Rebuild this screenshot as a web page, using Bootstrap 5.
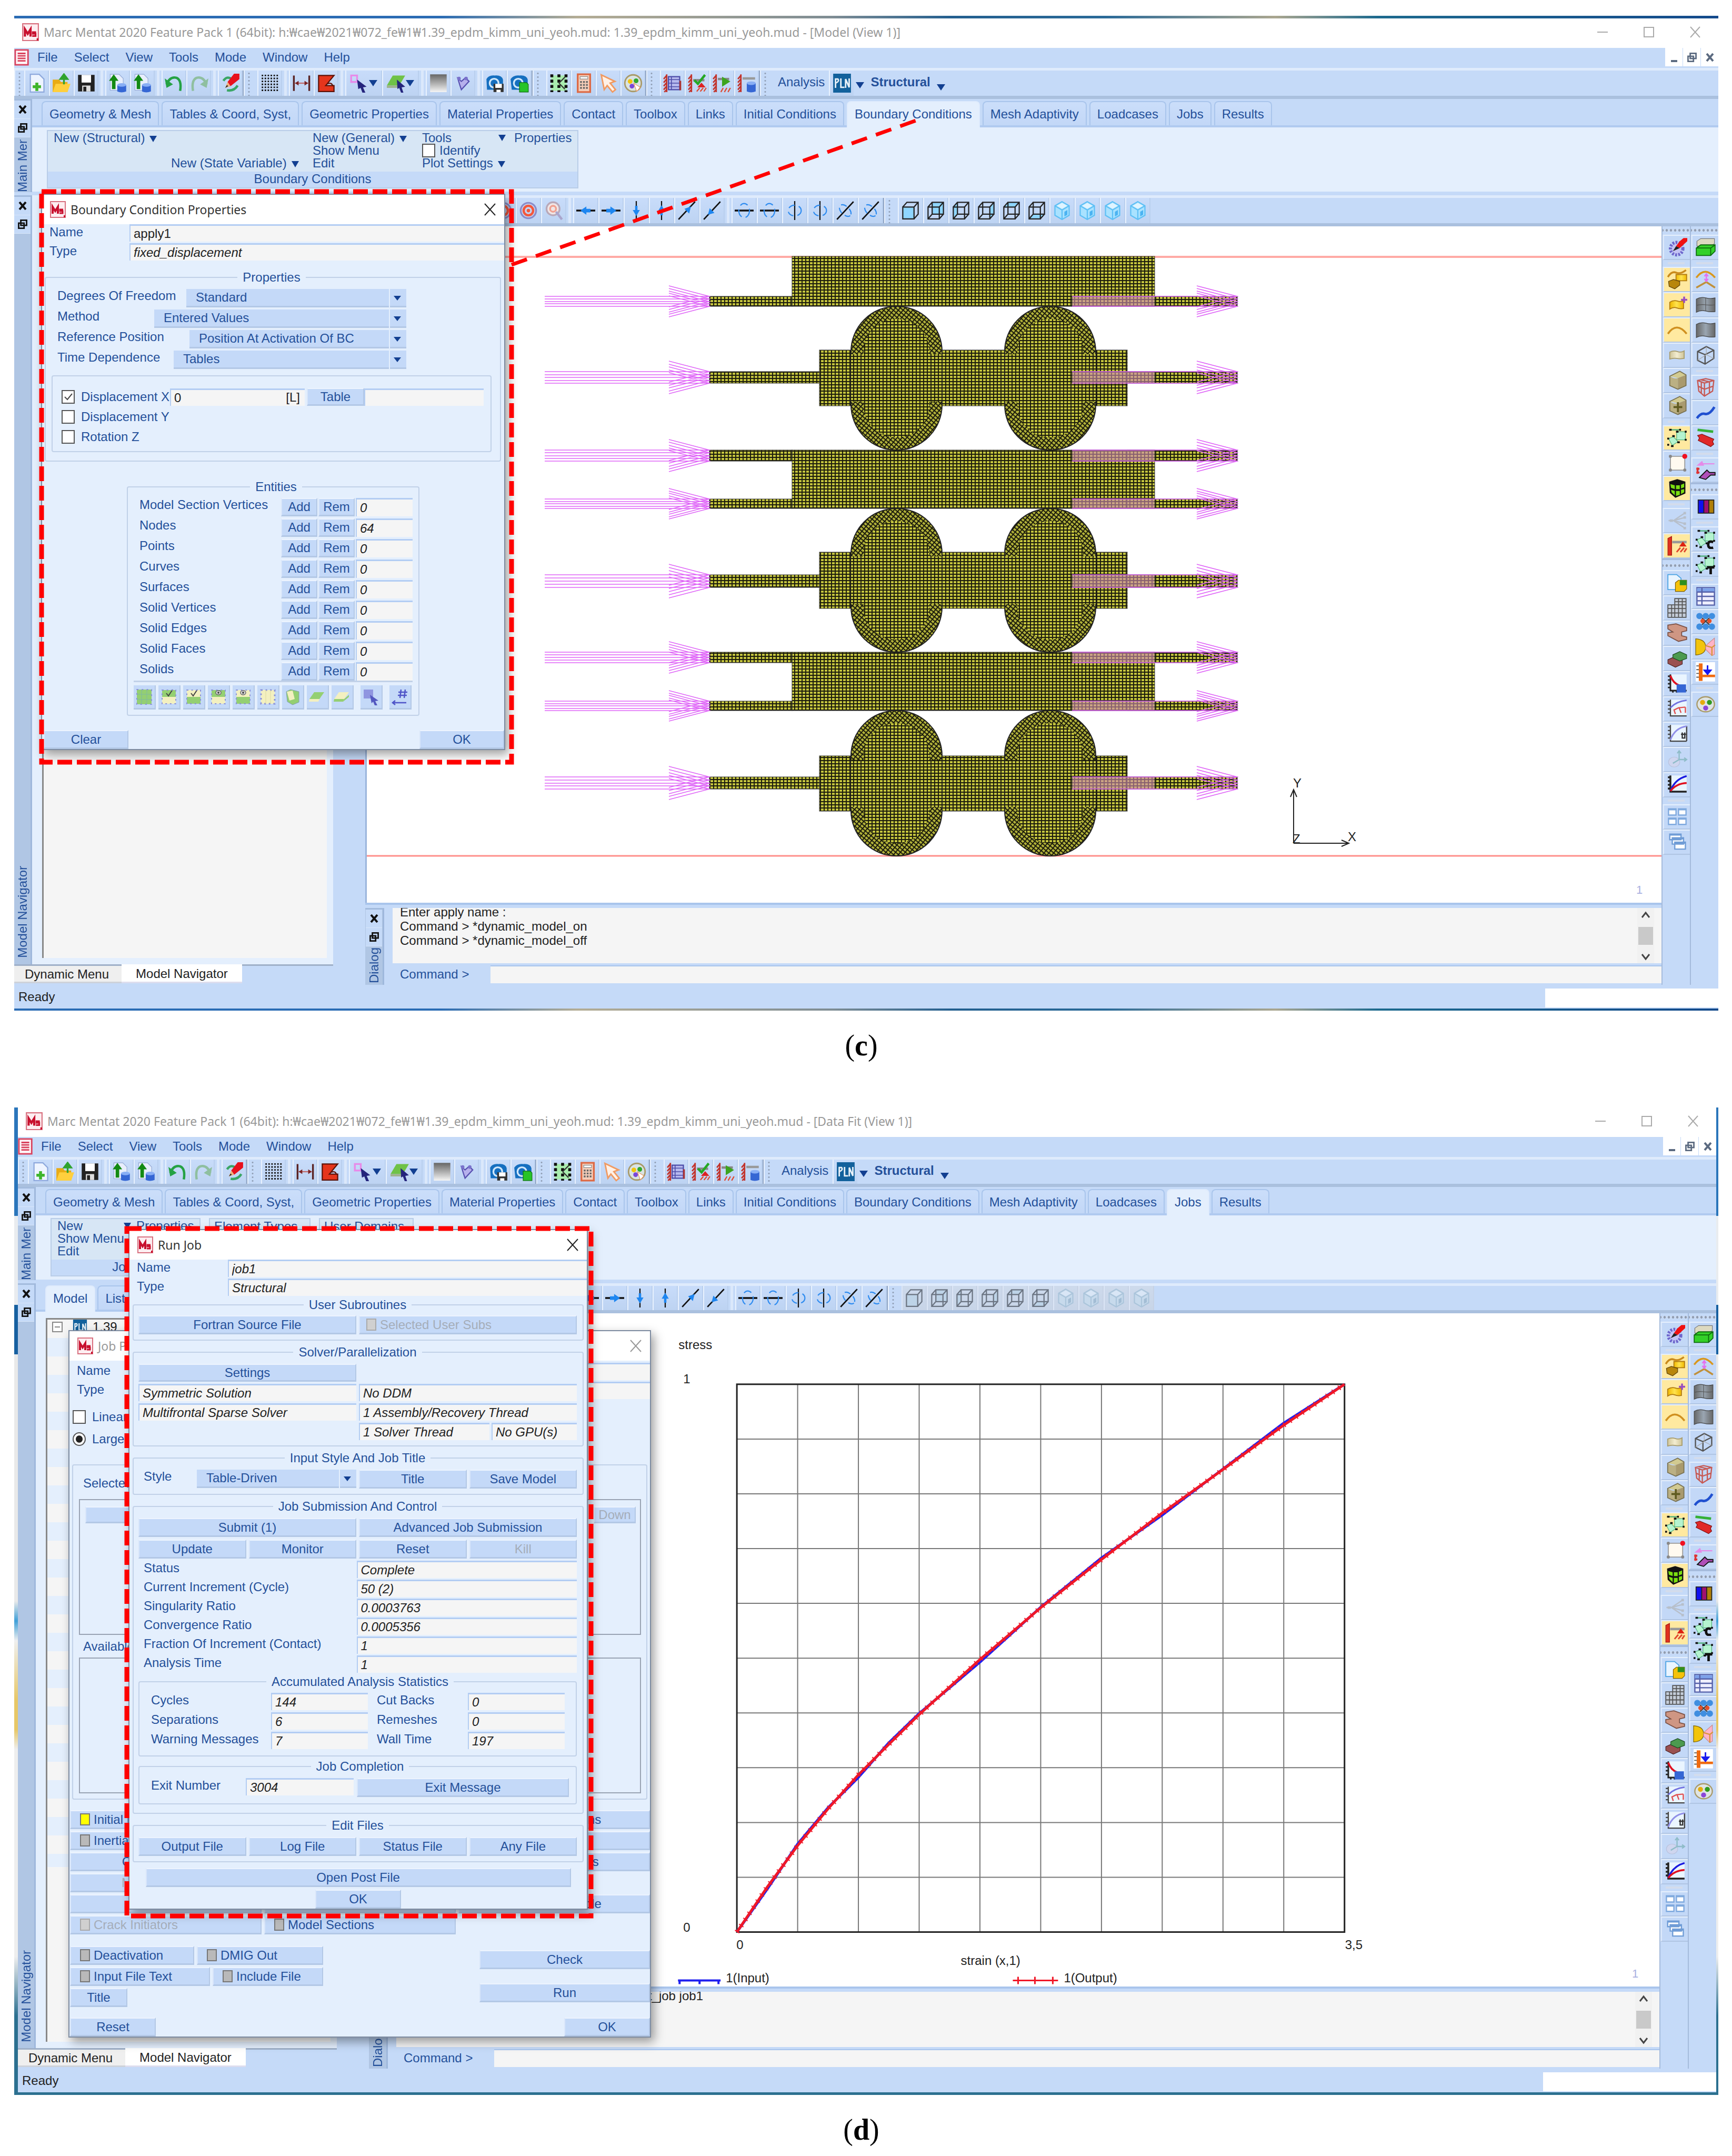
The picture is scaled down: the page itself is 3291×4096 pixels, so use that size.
<!DOCTYPE html>
<html lang="en">
<head>
<meta charset="utf-8">
<meta name="viewport" content="width=device-width, initial-scale=1">
<title>Marc Mentat 2020 Feature Pack 1</title>
<link href="https://cdn.jsdelivr.net/npm/bootstrap@5.3.0/dist/css/bootstrap.min.css" rel="stylesheet">
<style>
:root{--ink:#24509a;--bar:#c5daf8;--pane:#e4effd;--edge:#a9bfdd;--paper:#f5f5f5}
body{font:24px/28px "Liberation Sans",Arial,sans-serif;color:var(--ink);background:#fff}
.page{padding:30px 26px 20px 27px}
.win{position:relative;background:var(--bar);--bar-h:59px;--tab-gap:5px}
.win-c{border-top:5px solid #2f6db0;border-bottom:4px solid #35708c}
.win-c{border-image:linear-gradient(90deg,#2b6cb4 0 25%,#b4ad95 33%,#7f8d94 48%,#235f8f 55%,#2a6a98 64%,#aaa68f 74%,#1d6a8e 80%,#144a8c) 5 0 4 0}
.win-d{--bar-h:57px;--tab-gap:4px;border-style:solid;border-width:0 4px 5px 7px;border-color:#2c6f9c;border-image:linear-gradient(180deg,#2b76bb 0 11%,#e9ecef 11% 20%,#1760a0 20% 25%,#e9e9e9 25% 50%,#3fa0d8 52%,#efefef 54%,#e7c766 60% 63%,#eee 65% 86%,#2c7090 92%) 0 4 5 7}
a{color:inherit;text-decoration:none}
button,input,select{font:inherit;color:inherit;border:0;border-radius:0;padding:0;background:none;min-width:0}
.titlebar{height:56px;background:#fff;font-family:"Noto Sans",sans-serif;font-size:23px;color:#999;padding:0 0 4px 14px}
.logo{width:34px;height:34px;flex:none}
.wctl{width:88px;height:40px;display:flex;align-items:center;justify-content:center}
.menubar{height:38px;padding-bottom:3px}
.menubar a{margin-right:31px}
.mdi{width:33px;height:35px;background:#fff;margin-left:1px;display:flex;align-items:center;justify-content:center}
.toolbar{height:var(--bar-h);border-top:5px solid #dfebfc;border-bottom:6px solid #aac0de;align-items:stretch}
.tb{width:47px;border-left:2px solid #e9f2fe;border-right:2px solid #b9cfee;display:flex;align-items:center;justify-content:center;background:linear-gradient(#c8dcfa,#bdd3f2);flex:none}
.viewbar{padding-left:238px}
.viewbar .tb{width:48px}
.tb svg,.sb svg{width:36px;height:38px;flex:none}
.tb-wide{width:70px}
.vsep{width:13px;flex:none;background:linear-gradient(90deg,transparent 4px,#dbe8fb 4px 9px,transparent 9px)}
.grip{width:28px;flex:none;border-left:2px solid #8fa4c4;background:radial-gradient(circle,#8f9db4 1px,transparent 2px) 6px 2px/8px 7px repeat-y,linear-gradient(90deg,#e9f2fe 2px,transparent 2px)}
.grip-first{width:19px;border-left:0}
.caret{width:0;height:0;border:8px solid transparent;border-top:12px solid #123f91;border-bottom:0;display:inline-block;flex:none}
.side{width:34px;flex:none;background:#b0c6e4;border-right:3px solid #9fb8dc;border-top:3px solid #a3bbdd;display:flex;flex-direction:column;align-items:center;overflow:hidden}
.side .sbtn{width:31px;height:35px;background:#c5daf8;flex:none;display:flex;align-items:center;justify-content:center;border-bottom:1px solid #d9e6fa}
.vtext{writing-mode:vertical-rl;transform:rotate(180deg);line-height:30px;white-space:nowrap}
.tabs{height:54px;padding:4px 0 0 18px;border-bottom:4px solid #b0caf0;gap:var(--tab-gap)}
.tabs a{padding:0 13px;border:2px solid #a9c5ec;border-bottom:0;border-radius:8px 8px 0 0;line-height:46px;background:linear-gradient(#cbdefa,#c2d7f7);white-space:nowrap}
.tabs a.on{background:var(--pane);border-color:#dfebfc;height:50px}
.ribbon{height:122px;background:var(--pane);padding:5px 0 0 28px}
.grp{background:#d7e6f5;border:2px solid #b9cde8;height:111px;display:flex;flex-direction:column}
.grp-foot{background:var(--bar);height:30px;line-height:28px;text-align:center;margin-top:auto}
.rgrid{display:grid;grid-template-columns:223px 269px 208px 175px 120px;grid-auto-rows:24px;line-height:24px;padding:1px 0 0 11px;white-space:nowrap}
.rgrid .caret{border-width:12px 7px 0;margin-left:9px}
.tick{appearance:none;width:25px;height:26px;border:2px solid #555;background:#fff;flex:none;margin:0}
.tick:checked{background:#fff url("data:image/svg+xml,%3Csvg xmlns='http://www.w3.org/2000/svg' viewBox='0 0 20 20'%3E%3Cpath d='M3 10 8 15 17 4' fill='none' stroke='%23444' stroke-width='2'/%3E%3C/svg%3E") center/20px 20px no-repeat}
.tick-round{background:radial-gradient(#222 6px,#fff 7px)}
.split{height:6px;background:#c5daf8}
.nav-col{width:606px;flex:none}
.nav-gap{width:61px;flex:none}
.nav-pane{background:var(--pane);padding:12px 12px 12px 19px}
.nav-list{background:var(--paper);border-left:3px solid #888;min-height:200px}
.nav-rows{border-top:3px solid #888;background:linear-gradient(#f5f5f5,#f5f5f5) 0 1040px/100% 100% no-repeat,repeating-linear-gradient(#f5f5f5 0 35px,var(--pane) 35px 70px);overflow:hidden}
.bot-tabs{height:39px;color:#222;border-top:3px solid #9fb0c8;line-height:31px}
.bot-tabs a{padding:0 24px 0 20px;background:#efefef;border-bottom:3px solid #cdd2da;height:33px}
.bot-tabs a.on{background:#fff;padding:0 27px;height:36px;margin-top:-3px;border-color:#dde;line-height:35px}
.viewport{background:#fff;border-left:3px solid #9bb5dc}
.viewport svg{display:block;width:100%;height:auto}
.rbar{width:54px;flex:none;background:var(--bar);border-left:2px solid #a5bbdc}
.sb{height:48px;width:52px;display:flex;align-items:center;justify-content:center;border-top:2px solid #e6f0fd;border-left:3px solid #dbe8fb;border-bottom:2px solid #b0c5e3;background:#c3d8f7}
.sb.hot{background:#ffe9a0}
.sb svg{width:40px;height:38px}
.hsep{height:13px;background:linear-gradient(transparent 4px,#d3dcec 4px 8px,transparent 8px) 10px 0/32px 100% no-repeat}
.hgrip{height:16px;background:radial-gradient(circle,#8f9db4 2px,#fff 3px,transparent 3px) 4px 3px/8px 9px repeat-x}
.hgrip-mid{height:22px;border-top:3px solid #a5bbdc;background-position:4px 6px}
.log{background:var(--paper);color:#222;height:105px;overflow:hidden;line-height:27px;padding-right:14px}
.log-in{margin:-6px 0 0 14px}
.scroll{width:32px;background:#f1f1f1;display:flex;flex-direction:column;align-items:center;justify-content:space-between}
.thumb{width:28px;height:34px;background:#c9c9c9}
.cmd{height:34px;background:var(--paper);border-top:2px solid #a9c5ec}
.status{height:45px;color:#222;padding-left:8px;line-height:45px}
.status-box{width:329px;background:#fff;margin:7px 0 2px auto}
.caption-fig{font:56px/60px "Liberation Serif",serif;color:#000;text-align:center;padding:36px 19px 0 0}
.cap-c{height:184px}
.dlg{position:absolute;background:var(--pane);border:2px solid #7d8ba0;box-shadow:6px 8px 18px rgba(0,0,0,.38)}
.dlg-title{height:56px;background:#fff;font-family:"Noto Sans",sans-serif;font-size:23px;color:#333;padding:0 14px}
.dlg-title .logo{width:32px}
.fld{background:var(--paper);color:#222;height:33px;padding:0 6px;border-top:3px solid #b3cdf3;border-left:2px solid #b3cdf3;font-style:italic;width:100%}
.frow{display:flex;align-items:flex-start;height:36px;padding-left:14px}
.frow label{flex:none;line-height:30px}
fieldset{border:2px solid #c1d1e8;border-radius:4px;margin:0}
legend{float:none;width:auto;margin:0 auto;padding:0 10px;font-size:24px;line-height:28px}
.ubtn{background:#c4d9f8;border-top:2px solid #edf4fe;border-left:2px solid #d9e6fa;border-bottom:3px solid #b3c8e6;border-right:2px solid #b3c8e6;height:36px;line-height:28px;text-align:center;white-space:nowrap}
.ubtn:disabled{color:#a5adb8}
.ubtn-l{text-align:left;padding-left:17px;display:flex;align-items:center;gap:7px}
.led{width:19px;height:23px;border:2px solid #777;background:#b9b9b9;flex:none}
.led-y{background:#ff0}
:disabled .led{background:#d0d0d0;border-color:#aaa}
.combo{position:relative;flex:1}
.combo select{appearance:none;width:100%;height:35px;background:#c4d9f8;border-bottom:3px solid #b3c8e6;padding-left:18px;display:block}
.combo::after{content:"";position:absolute;right:10px;top:13px;border:7px solid transparent;border-top:9px solid #123f91;border-bottom:0}
.combo::before{content:"";position:absolute;right:31px;top:0;bottom:0;width:2px;background:#e4effd}
.stack{display:flex;flex-direction:column}
.g4{gap:4px}.g5{gap:5px}
.top-al{display:flex;align-items:flex-start;line-height:26px}
.annot{position:absolute;inset:0;width:100%;height:100%;pointer-events:none}
.w-170{width:170px}.w-152{width:152px}.w-173{width:173px}.w-247{width:245px}.w-184{width:184px}.w-251{width:251px}.w-221{width:221px}
.dlg-bc{left:51px;top:333px;width:882px}
.dlg-job{left:96px;top:423px;width:1107px}
.dlg-run{left:210px;top:231px;width:873px}
.ent{width:556px;margin:34px auto 0;padding:7px 11px 10px 22px}
.mini{width:42px;height:46px;background:#c4d9f8;border-bottom:3px solid #b3c8e6;border-right:2px solid #b3c8e6;display:flex;align-items:center;justify-content:center}
.mini svg{width:32px;height:34px}
.mini-bar{border-top:3px solid #c1d1e8;padding-top:6px;margin-left:-11px}
.props{margin:15px 6px 0 5px;padding:8px 16px 16px 11px}
.props-in{margin-top:12px;padding:22px 13px 10px 17px}
.lbox{border:2px solid #99a3b3;height:258px}
.two{display:grid;grid-template-columns:1fr 1fr;gap:4px 5px}
.run-fs{margin:8px 6px 0;padding:8px 11px 10px 9px}
.run-fs-first{margin-top:0;padding-top:6px}
.stat{display:grid;grid-template-columns:228px 184px 17px 173px 184px;gap:4px 0;line-height:28px}
.job3{display:grid;grid-template-columns:1fr 1fr 1fr;gap:4px 5px}
.tx{font:24px "Liberation Sans",Arial,sans-serif;fill:#222}
.faded{opacity:.55;filter:grayscale(.7)}
</style>
<script src="https://cdn.jsdelivr.net/npm/bootstrap@5.3.0/dist/js/bootstrap.bundle.min.js"></script>
</head>
<body>
<svg width="0" height="0" class="position-absolute" aria-hidden="true">
<defs>
<linearGradient id="gGray" x1="0" y1="0" x2="0" y2="1"><stop offset="0" stop-color="#666"/><stop offset="1" stop-color="#f4f4f4"/></linearGradient>
<linearGradient id="gSilv"><stop offset="0" stop-color="#666"/><stop offset=".5" stop-color="#9aa6b2"/><stop offset="1" stop-color="#666"/></linearGradient>
<linearGradient id="gGold"><stop offset="0" stop-color="#f0b800"/><stop offset=".5" stop-color="#ffe34d"/><stop offset="1" stop-color="#f0b800"/></linearGradient>
<linearGradient id="gTan"><stop offset="0" stop-color="#cfc59a"/><stop offset=".5" stop-color="#f3edd0"/><stop offset="1" stop-color="#cfc59a"/></linearGradient>
<pattern id="mesh" width="7" height="6" patternUnits="userSpaceOnUse"><rect width="7" height="6" fill="#c4c43e"/><path d="M0 1H7M1 0V6" stroke="#1c1c0c" stroke-width="2"/></pattern>
<pattern id="mesh2" width="7" height="6" patternUnits="userSpaceOnUse" patternTransform="rotate(40)"><rect width="7" height="6" fill="#b2b23a"/><path d="M0 1H7M1 0V6" stroke="#1c1c0c" stroke-width="2"/></pattern>
<pattern id="pinkv" width="7" height="10" patternUnits="userSpaceOnUse"><rect width="7" height="10" fill="#d18fb0" fill-opacity=".6"/><path d="M1 0V10" stroke="#8a5a70" stroke-width="1"/></pattern>
</defs>
<symbol id="logo" viewBox="0 0 32 32"><path d="M2 1H30V31H2Z" fill="#fdeef1" stroke="#d8707f" stroke-width="2"/><path d="M6 24V11L11 19 16 11V24" fill="none" stroke="#c8102e" stroke-width="4"/><path d="M26 16H20V19H25V23H19" fill="none" stroke="#c8102e" stroke-width="3"/><path d="M27 27h3v4h-3z" fill="#c8102e"/></symbol>
<symbol id="doc" viewBox="0 0 32 32"><path d="M2 1H28V31H2Z" fill="#fdf2f5" stroke="#d9415c" stroke-width="3"/><path d="M7 8H23M7 13H23M7 18H23M7 23H23" stroke="#d9415c" stroke-width="3"/></symbol>
<symbol id="restore" viewBox="0 0 32 32"><path d="M11 5H27V19H11ZM5 13H20V27H5Z" fill="none" stroke="currentColor" stroke-width="4"/></symbol>
<symbol id="new" viewBox="0 0 32 32"><path d="M5 1H20L28 9V31H5Z" fill="#eef4ff" stroke="#8ea9dd" stroke-width="2"/><path d="M16 15V29M9 22H23" stroke="#3fb52c" stroke-width="5"/></symbol>
<symbol id="open" viewBox="0 0 32 32"><path d="M1 10H12L15 14H26V31H1Z" fill="#e9ab15"/><path d="M6 17H31L26 31H1Z" fill="#ffcf3d"/><path d="M20 18V6M14 9 20 1 26 9Z" fill="#2fa32f" stroke="#2fa32f" stroke-width="3"/></symbol>
<symbol id="save" viewBox="0 0 32 32"><path d="M2 2H30V30H2Z" fill="#222"/><path d="M8 2H24V15H8Z" fill="#fff"/><path d="M9 20H23V30H9Z" fill="#ddd"/><path d="M11 22H16V30H11Z" fill="#222"/></symbol>
<symbol id="updb" viewBox="0 0 32 32"><path d="M3 1H18L25 8V28H3Z" fill="#e7eefc" stroke="#93a8d4"/><path d="M6 26V12H1L9 1 17 12H12V26Z" fill="#138a13"/><path d="M15 19V30Q22 33 30 30V19Z" fill="#3566d4"/><ellipse cx="22.500" cy="19" rx="7.500" ry="3" fill="#88aef5"/></symbol>
<symbol id="undo" viewBox="0 0 32 32"><path d="M3 18Q9 4 20 7 29 11 26 29" fill="none" stroke="#25a244" stroke-width="4"/><path d="M0 8 3 24 14 18Z" fill="#25a244"/></symbol>
<symbol id="redo" viewBox="0 0 32 32"><path d="M29 18Q23 4 12 7 3 11 6 29" fill="none" stroke="#8fbfa0" stroke-width="4"/><path d="M32 8 29 24 18 18Z" fill="#8fbfa0"/></symbol>
<symbol id="pencil" viewBox="0 0 32 32"><path d="M4 12Q10 3 18 9M28 20Q22 30 10 28" fill="none" stroke="#3aa665" stroke-width="4"/><path d="M22 0H31V9L16 21 11 14Z" fill="#e8101c"/><path d="M11 14 16 21 7 24Z" fill="#f2b27c"/><path d="M7 24 12 21 10 19Z" fill="#222"/></symbol>
<symbol id="dots" viewBox="0 0 32 32"><path d="M2 3H31M2 8H31M2 13H31M2 18H31M2 23H31M2 28H31" stroke="#111" stroke-width="2.500" stroke-dasharray="2.500 2.500"/></symbol>
<symbol id="dim" viewBox="0 0 32 32"><path d="M3 3V29M29 3V29" stroke="#5a2323" stroke-width="3"/><path d="M5 16H27" stroke="#c06a6a" stroke-width="2"/><path d="M5 16 11 12V20ZM27 16 21 12V20Z" fill="#7a2323"/></symbol>
<symbol id="ang" viewBox="0 0 32 32"><path d="M3 3H29L15 20H29V30H3Z" fill="#e5351c" stroke="#5c1208" stroke-width="2"/><path d="M18 17Q25 14 27 21" fill="none" stroke="#5c1208" stroke-width="2"/></symbol>
<symbol id="sel" viewBox="0 0 32 32"><path d="M2 3H12V14H2Z" fill="none" stroke="#e78be9" stroke-width="3"/><path d="M12 10 28 22 22 23 26 32 21 32 18 24 14 26Z" fill="#24247c"/></symbol>
<symbol id="plane" viewBox="0 0 32 32"><path d="M10 3H31L21 20H0Z" fill="#6fc247"/><path d="M0 20H21V24H0Z" fill="#9fb28f"/><path d="M17 10 31 22 25 23 28 32 24 32 21 24 18 26Z" fill="#24247c"/></symbol>
<symbol id="grad" viewBox="0 0 32 32"><path d="M2 1H30V31H2Z" fill="url(#gGray)"/></symbol>
<symbol id="poly" viewBox="0 0 32 32"><path d="M7 8 13 13 20 7 26 13 13 27 10 18Z" fill="#b6b0ec" stroke="#5850b0" stroke-width="2"/><circle cx="9" cy="8" r="3" fill="#7a72cc"/><circle cx="21" cy="8" r="3" fill="#7a72cc"/></symbol>
<symbol id="cam" viewBox="0 0 32 32"><path d="M2 9Q6 2 16 3 28 2 30 10V27H3Z" fill="#156fc0"/><circle cx="15" cy="16" r="9" fill="#cfe7fb"/><circle cx="15" cy="16" r="6" fill="#156fc0"/><path d="M14 17H31V31H14Z" fill="#333"/><path d="M17 17H28V24H17ZM19 27H26V31H19Z" fill="#fff"/></symbol>
<symbol id="cam2" viewBox="0 0 32 32"><path d="M1 9Q6 2 16 3 28 2 30 10V27H3Z" fill="#156fc0"/><circle cx="14" cy="16" r="9" fill="#cfe7fb"/><circle cx="14" cy="16" r="6" fill="#156fc0"/><path d="M16 15H28L31 18V31H16Z" fill="#27c427" stroke="#0e6d0e"/></symbol>
<symbol id="nodes" viewBox="0 0 32 32"><path d="M3 3H29V29H3Z" fill="#a9ecae"/><path d="M4 1V31M16 1V31M28 1V31" stroke="#111" stroke-width="5" stroke-dasharray="5 4"/><path d="M16 16 26 6M16 16 26 26" stroke="#333" stroke-width="2"/></symbol>
<symbol id="calc" viewBox="0 0 32 32"><path d="M6 1H27V31H6Z" fill="#f4cdb9" stroke="#dd6a45" stroke-width="3"/><path d="M10 5H23V9H10Z" fill="#fff" stroke="#888"/><path d="M10 14H24M10 19H24M10 24H24" stroke="#666" stroke-width="3" stroke-dasharray="3 2"/></symbol>
<symbol id="cursor" viewBox="0 0 32 32"><path d="M4 2 27 13 19 16 28 27 23 31 14 20 9 27Z" fill="#fff1e6" stroke="#f09a62" stroke-width="2.500"/></symbol>
<symbol id="pal" viewBox="0 0 32 32"><ellipse cx="16" cy="16" rx="14" ry="14" fill="#d9e3e3" stroke="#a99a68" stroke-width="2.500"/><circle cx="11" cy="13" r="4" fill="#f1c40f"/><circle cx="21" cy="12" r="4" fill="#2fa82f"/><circle cx="14" cy="21" r="4" fill="#7b46d8"/><path d="M17 16 28 23 22 30Z" fill="#fff" stroke="#e8905a"/></symbol>
<symbol id="pal2" viewBox="0 0 32 32"><ellipse cx="16" cy="16" rx="14" ry="12" fill="#dfe4e4" stroke="#a99a68" stroke-width="2"/><circle cx="11" cy="13" r="4" fill="#e5ac0d"/><circle cx="22" cy="13" r="4" fill="#2f9a1f"/><circle cx="16" cy="22" r="4" fill="#8b46d8"/></symbol>
<symbol id="wall" viewBox="0 0 32 32"><path d="M6 1V31M6 3 1 9M6 9 1 15M6 15 1 21M6 21 1 27M6 27 2 31" stroke="#c2332b" stroke-width="2.500" fill="none"/></symbol>
<symbol id="w1" viewBox="0 0 32 32"><use href="#wall"/><path d="M9 5H28V27H9Z" fill="#b6b9ee" stroke="#4c4ca8" stroke-width="2"/><path d="M9 10H28M9 16H28M9 22H28M14 5V27" stroke="#4c4ca8" stroke-width="1.500"/><path d="M29 12V28" stroke="#a33" stroke-width="3"/></symbol>
<symbol id="w2" viewBox="0 0 32 32"><use href="#wall"/><path d="M9 11H28" stroke="#888" stroke-width="4"/><path d="M11 11 17 17 29 2" stroke="#25a825" stroke-width="4" fill="none"/><path d="M23 15 30 23H16Z" fill="#d22"/><path d="M15 30 20 24M21 30 26 24M27 30 31 24" stroke="#e0482e" stroke-width="2"/></symbol>
<symbol id="w3" viewBox="0 0 32 32"><use href="#wall"/><path d="M9 9H28" stroke="#888" stroke-width="4"/><path d="M16 5 30 13 16 22Z" fill="#3da41f"/><path d="M14 31 18 24M20 31 24 24M26 31 30 24" stroke="#e0482e" stroke-width="2"/></symbol>
<symbol id="w4" viewBox="0 0 32 32"><use href="#wall"/><path d="M9 8H30" stroke="#999" stroke-width="4"/><path d="M16 16V30Q23 33 31 30V16Z" fill="#3566d4"/><ellipse cx="23.500" cy="16" rx="7.500" ry="3" fill="#88aef5"/></symbol>
<symbol id="pln" viewBox="0 0 32 32"><path d="M1 0H31V32H1Z" fill="#12619c"/><path d="M5 24V9H9Q12 13 5 16M14 8V23H20M22 24V9L28 23V8" fill="none" stroke="#e8f1f8" stroke-width="2.500"/></symbol>
<symbol id="target" viewBox="0 0 32 32"><circle cx="16" cy="16" r="13" fill="none" stroke="#8c8cc8" stroke-width="3"/><circle cx="16" cy="16" r="8" fill="none" stroke="#f4583c" stroke-width="4"/><circle cx="16" cy="16" r="3" fill="#f4583c"/></symbol>
<symbol id="mag" viewBox="0 0 32 32"><circle cx="15" cy="13" r="11" fill="#f0e6e6" stroke="#b9a8b8" stroke-width="3"/><circle cx="15" cy="13" r="5" fill="none" stroke="#f0a090" stroke-width="3"/><path d="M20 18 30 31" stroke="#a9a4cc" stroke-width="4"/></symbol>
<symbol id="al" viewBox="0 0 32 32"><path d="M0 16H32" stroke="#111" stroke-width="3"/><path d="M7 16 17 9V13H24V19H17V23Z" fill="#1e86f0"/></symbol>
<symbol id="ar" viewBox="0 0 32 32"><path d="M0 16H32" stroke="#111" stroke-width="3"/><path d="M25 16 15 9V13H8V19H15V23Z" fill="#1e86f0"/></symbol>
<symbol id="ad" viewBox="0 0 32 32"><path d="M16 0V32" stroke="#111" stroke-width="2"/><path d="M16 25 10 15H14V8H18V15H22Z" fill="#1e86f0"/></symbol>
<symbol id="au" viewBox="0 0 32 32"><path d="M16 0V32" stroke="#111" stroke-width="2"/><path d="M16 7 10 17H14V24H18V17H22Z" fill="#1e86f0"/></symbol>
<symbol id="aq" viewBox="0 0 32 32"><path d="M2 31 30 1" stroke="#111" stroke-width="2.500"/><path d="M23 9 12 13 20 21Z" fill="#1e86f0"/></symbol>
<symbol id="az" viewBox="0 0 32 32"><path d="M2 31 30 1" stroke="#111" stroke-width="2.500"/><path d="M9 23 12 12 20 20Z" fill="#1e86f0"/></symbol>
<symbol id="rh" viewBox="0 0 32 32"><path d="M0 16H32" stroke="#111" stroke-width="3"/><ellipse cx="16" cy="16" rx="9" ry="12" fill="none" stroke="#2f8cf0" stroke-width="2" stroke-dasharray="14 7"/></symbol>
<symbol id="rv" viewBox="0 0 32 32"><path d="M16 0V32" stroke="#111" stroke-width="2"/><ellipse cx="16" cy="16" rx="11" ry="9" fill="none" stroke="#2f8cf0" stroke-width="2" stroke-dasharray="11 7"/></symbol>
<symbol id="rd" viewBox="0 0 32 32"><path d="M2 31 30 1" stroke="#111" stroke-width="2.500"/><ellipse cx="16" cy="16" rx="12" ry="7" transform="rotate(45 16 16)" fill="none" stroke="#2f8cf0" stroke-width="2" stroke-dasharray="10 6"/></symbol>
<symbol id="wire" viewBox="0 0 32 32"><path d="M3 10H22V30H3ZM10 2H29V22H10ZM3 10 10 2M22 10 29 2M22 30 29 22M3 30 10 22" fill="none" stroke="#222" stroke-width="2"/></symbol>
<symbol id="c1" viewBox="0 0 32 32"><path d="M3 10H22V30H3Z" fill="#8fd6ff"/><path d="M3 10H22V30H3ZM3 10 10 2H29V22L22 30M22 10 29 2" fill="none" stroke="#222" stroke-width="2"/></symbol>
<symbol id="c2" viewBox="0 0 32 32"><path d="M10 2H29V22H10Z" fill="#8fd6ff"/><use href="#wire"/></symbol>
<symbol id="c3" viewBox="0 0 32 32"><path d="M3 10 10 2V22L3 30Z" fill="#8fd6ff"/><use href="#wire"/></symbol>
<symbol id="c4" viewBox="0 0 32 32"><path d="M22 10 29 2V22L22 30Z" fill="#8fd6ff"/><use href="#wire"/></symbol>
<symbol id="c5" viewBox="0 0 32 32"><path d="M3 10 10 2H29L22 10Z" fill="#8fd6ff"/><use href="#wire"/></symbol>
<symbol id="c6" viewBox="0 0 32 32"><path d="M3 30 10 22H29L22 30Z" fill="#8fd6ff"/><use href="#wire"/></symbol>
<symbol id="iso" viewBox="0 0 32 32"><path d="M16 1 28 8V24L16 31 4 24V8Z" fill="#a9e2ff" stroke="#5fc0f5" stroke-width="2"/><path d="M4 8 16 15 28 8M16 15V31" fill="none" stroke="#5fc0f5" stroke-width="2"/><path d="M16 3 25 8 16 13 7 8Z" fill="#dff4ff"/><path d="M20 18 25 15V23L20 26Z" fill="#4bb3f2"/></symbol>
<symbol id="s1" viewBox="0 0 32 32"><circle cx="15" cy="18" r="10" fill="#c3c3f4" stroke="#6d66cc" stroke-width="5" stroke-dasharray="3 2"/><path d="M20 6 26 1H32V6L20 17 14 14Z" fill="#f01010"/><path d="M14 14 20 17 9 22Z" fill="#222"/></symbol>
<symbol id="s2" viewBox="0 0 32 32"><path d="M1 12Q7 2 14 5T30 1" fill="none" stroke="#c98a1c" stroke-width="3"/><path d="M14 8H31V18H14Z" fill="url(#gGold)" stroke="#b07a10" stroke-width="1.500"/><path d="M2 19 10 16 20 19V25L12 31 3 27Z" fill="#b8860b" stroke="#5c4008"/></symbol>
<symbol id="s3" viewBox="0 0 32 32"><path d="M4 12Q10 8 16 10T26 9V22Q20 23 15 21T4 23Z" fill="url(#gGold)" stroke="#b07a10" stroke-width="1.500"/><path d="M27 3V13M22 8H32" stroke="#9a4fc0" stroke-width="3"/></symbol>
<symbol id="s4" viewBox="0 0 32 32"><path d="M1 22Q15 2 31 22" fill="none" stroke="#d09020" stroke-width="3"/></symbol>
<symbol id="s5" viewBox="0 0 32 32"><path d="M4 11Q10 8 16 10T27 9V21Q20 22 15 21T4 22Z" fill="url(#gTan)" stroke="#a89c6c" stroke-width="1.500"/></symbol>
<symbol id="s6" viewBox="0 0 32 32"><path d="M4 9 20 1 30 7 17 12Z" fill="#d2ca90"/><path d="M4 9Q12 14 17 12V30L4 24Z" fill="#bbb083"/><path d="M17 12 30 7V24L17 30Z" fill="#a99a6e"/><path d="M4 9 20 1 30 7V24L17 30 4 24Z" fill="none" stroke="#777050" stroke-width="1.500"/></symbol>
<symbol id="s7" viewBox="0 0 32 32"><use href="#s6"/><path d="M17 10V26M10 18H24" stroke="#5f5a20" stroke-width="3"/></symbol>
<symbol id="s8" viewBox="0 0 32 32"><path d="M4 3H20" stroke="#4fb07a" stroke-width="2"/><path d="M15 6H29V19H15ZM2 17 10 14 17 22 8 28Z" fill="#b5f3cf" stroke="#4fb07a"/><path d="M3 3h4M19 3h3M14 6h4M28 6h3M28 19h3M0 17h3M8 13h4M16 23h4M6 29h4M0 27h3" stroke="#111" stroke-width="3"/></symbol>
<symbol id="s9" viewBox="0 0 32 32"><path d="M5 5H28V27H5Z" fill="#fffaf0" stroke="#999" stroke-width="1.500"/><circle cx="5" cy="5" r="2.500" fill="#888"/><circle cx="5" cy="27" r="2.500" fill="#888"/><circle cx="28" cy="27" r="2.500" fill="#888"/><circle cx="28" cy="5" r="4" fill="#f01020"/></symbol>
<symbol id="s10" viewBox="0 0 32 32"><path d="M3 5 16 1 29 5V24L13 31 4 23Z" fill="#111"/><path d="M5 9 12 11V17L6 15ZM14 11 20 11V17H14ZM22 10 27 8V14L22 16ZM6 18 12 20V27L7 22ZM14 20H20V26L14 28ZM22 18 27 17V22L22 25Z" fill="#7be010"/></symbol>
<symbol id="s11" viewBox="0 0 32 32"><path d="M2 16H10L28 4M10 16 28 11M10 16 28 21M10 16 28 28" fill="none" stroke="#b7bfca" stroke-width="2"/><path d="M26 4h4M26 11h4M26 21h4M26 28h4M4 16h5" stroke="#b7bfca" stroke-width="4"/></symbol>
<symbol id="s12" viewBox="0 0 32 32"><path d="M1 4 7 1V31H1Z" fill="#e0301e" stroke="#a01810"/><path d="M8 10H31" stroke="#999" stroke-width="4"/><path d="M25 9 31 17H19Z" fill="#d21"/><path d="M15 26 21 19M21 26 27 19M27 26 31 20" stroke="#e0482e" stroke-width="2.500"/></symbol>
<symbol id="s13" viewBox="0 0 32 32"><path d="M1 3H15L22 9V27H1Z" fill="#eaf5ff" stroke="#4ba3e3" stroke-width="1.500"/><path d="M13 16 18 12H31V26L27 30H13Z" fill="#f5c20a" stroke="#7c5c00"/><path d="M20 12H31V20H20Z" fill="#2f8f1f"/></symbol>
<symbol id="s14" viewBox="0 0 32 32"><path d="M1 11H12V1H30V31H1ZM1 17H30M1 24H30M12 11H30M12 6H30M7 11V31M12 11V31M18 1V31M24 1V31" fill="#c4ccd8" stroke="#555" stroke-width="1.500"/></symbol>
<symbol id="s15" viewBox="0 0 32 32"><path d="M1 3 14 1 31 7V12L23 14V20L31 22V26L18 29 1 20V15L9 14 1 9Z" fill="#cf9683" stroke="#7a5045" stroke-width="1.500"/></symbol>
<symbol id="s16" viewBox="0 0 32 32"><path d="M1 18 12 13 24 19V25L13 30 1 24Z" fill="#9a5050" stroke="#4a2020"/><path d="M9 10 20 5 31 10V16L20 20 9 15Z" fill="#4c9a4f" stroke="#1d4a20"/></symbol>
<symbol id="s17" viewBox="0 0 32 32"><path d="M4 1H31V26H4Z" fill="#eaf5ff"/><path d="M5 1V27H31M1 4H5M1 10H5M1 16H5M1 22H5M9 30V27M15 30V27" stroke="#222" stroke-width="2.500" fill="none"/><path d="M5 3Q9 15 20 19" stroke="#e01020" stroke-width="3" fill="none"/><path d="M15 17H30V30H15Z" fill="#3566d4"/></symbol>
<symbol id="s18" viewBox="0 0 32 32"><path d="M4 1H31V26H4Z" fill="#eaf5ff"/><path d="M5 1V27H31M1 4H5M1 10H5M1 16H5M1 22H5" stroke="#444" stroke-width="2" fill="none"/><path d="M5 14Q14 4 31 2" stroke="#7070e0" stroke-width="2.500" fill="none"/><path d="M10 18 18 14 29 13M11 18 13 24M19 14 22 22M29 13V22" stroke="#e05050" stroke-width="2" fill="none"/></symbol>
<symbol id="s19" viewBox="0 0 32 32"><path d="M4 1H31V26H4Z" fill="#eaf5ff"/><path d="M5 1V27H31M1 4H5M1 10H5M1 16H5M1 22H5M31 3V27" stroke="#444" stroke-width="2" fill="none"/><path d="M5 25Q12 6 31 3" stroke="#9090e8" stroke-width="2.500" fill="none"/><path d="M24 13V22H28V13M22 16H30" stroke="#333" stroke-width="2" fill="none"/></symbol>
<symbol id="s20" viewBox="0 0 32 32"><ellipse cx="11" cy="20" rx="9" ry="8" fill="#cfd6ef" stroke="#b9c3de"/><path d="M19 2V16H31M19 16 9 22M16 6 19 2 22 6M27 13 31 16 27 19" fill="none" stroke="#8fbcc8" stroke-width="2"/></symbol>
<symbol id="s21" viewBox="0 0 32 32"><path d="M4 1H31V26H4Z" fill="#eaf5ff"/><path d="M5 1V27H31M1 4H5M1 10H5M1 16H5M1 22H5" stroke="#222" stroke-width="3" fill="none"/><path d="M5 26Q12 7 31 2" stroke="#1a1ae0" stroke-width="3" fill="none"/><path d="M5 26Q14 14 31 13" stroke="#e01020" stroke-width="3" fill="none"/></symbol>
<symbol id="s22" viewBox="0 0 32 32"><path d="M2 3H14V13H2ZM18 3H30V13H18ZM2 18H14V28H2ZM18 18H30V28H18Z" fill="#fff" stroke="#7fa9de" stroke-width="2"/><path d="M2 4H14M18 4H30M2 19H14M18 19H30" stroke="#7fa9de" stroke-width="3"/></symbol>
<symbol id="s23" viewBox="0 0 32 32"><path d="M4 3H22V12H4ZM8 9H26V19H8ZM12 16H29V27H12Z" fill="#fff" stroke="#6f9cd6" stroke-width="2"/><path d="M4 4H22M8 10H26M12 17H29" stroke="#6f9cd6" stroke-width="3"/></symbol>
<symbol id="t1" viewBox="0 0 32 32"><path d="M2 6 8 2H30V10L24 14H2Z" fill="#ddd9c0" stroke="#777"/><path d="M1 17 8 12H31V22L24 29H1Z" fill="#33d028" stroke="#0d6b0d" stroke-width="1.500"/><path d="M1 17H24V29M24 17 31 12" fill="none" stroke="#0d6b0d" stroke-width="1.500"/></symbol>
<symbol id="t2" viewBox="0 0 32 32"><path d="M1 13Q15-6 31 13" fill="none" stroke="#d9971c" stroke-width="3"/><path d="M1 29 17 20 31 29" fill="none" stroke="#c0903a" stroke-width="3"/><path d="M17 8V18M14 11 17 7 20 11M14 15 17 19 20 15" fill="none" stroke="#e56ff0" stroke-width="2"/></symbol>
<symbol id="t3" viewBox="0 0 32 32"><path d="M1 7Q8 3 16 5T31 5V27Q24 28 16 26T1 28Z" fill="url(#gSilv)" stroke="#444"/><path d="M16 5V26M1 17Q8 15 16 16T31 16" fill="none" stroke="#555"/></symbol>
<symbol id="t4" viewBox="0 0 32 32"><path d="M1 7Q8 3 16 5T31 5V27Q24 28 16 26T1 28Z" fill="url(#gSilv)" stroke="#444"/></symbol>
<symbol id="t5" viewBox="0 0 32 32"><path d="M3 10 17 2 29 8V21L15 30 3 24ZM3 10 15 15 29 8M15 15V30" fill="none" stroke="#555" stroke-width="2"/><path d="M17 2V15L3 24M17 15 29 21" fill="none" stroke="#aaa"/></symbol>
<symbol id="t6" viewBox="0 0 32 32"><path d="M3 5 16 2 29 5 27 22 14 30 5 22ZM3 5 14 9 29 5M14 9V30M4 14 14 19 28 14M9 7V26M22 7V25M9 4 22 7" fill="none" stroke="#c65a55" stroke-width="2"/></symbol>
<symbol id="t7" viewBox="0 0 32 32"><path d="M2 25Q8 16 15 18T30 7" fill="none" stroke="#2050d0" stroke-width="4"/></symbol>
<symbol id="t8" viewBox="0 0 32 32"><path d="M3 3 28 6" stroke="#35b035" stroke-width="4"/><path d="M3 12 10 10 29 18 27 22 29 26 24 30 4 20 6 16Z" fill="#e02828" stroke="#801010"/></symbol>
<symbol id="t9" viewBox="0 0 32 32"><path d="M8 6H30M4 8 10 3 12 8Z" stroke="#e58ae8" stroke-width="2" fill="#e58ae8"/><path d="M3 12V22M1 14H6M1 20H6" stroke="#d33" stroke-width="3"/><path d="M6 28 18 16 22 20H31V24H24L16 31Z" fill="#b04fb8" stroke="#111" stroke-width="1.500"/></symbol>
<symbol id="t10" viewBox="0 0 32 32"><path d="M4 5H13V26H4Z" fill="#1010f0"/><path d="M13 5H21V26H13Z" fill="#a01070"/><path d="M21 5H29V26H21Z" fill="#b0800a"/><path d="M4 5H29V26H4ZM13 5V26M21 5V26" fill="none" stroke="#222" stroke-width="1.500"/></symbol>
<symbol id="t11" viewBox="0 0 32 32"><use href="#s8"/><path d="M28 21Q20 18 20 25T28 30" stroke="#111" stroke-width="4" fill="none"/></symbol>
<symbol id="t12" viewBox="0 0 32 32"><use href="#s8"/><path d="M18 21H30M24 21V32" stroke="#111" stroke-width="4" fill="none"/></symbol>
<symbol id="t13" viewBox="0 0 32 32"><path d="M2 2H30V30H2Z" fill="#eef" stroke="#5560a8" stroke-width="2"/><path d="M2 3H30V9H2Z" fill="#7da2ea"/><path d="M2 9H30M2 16H30M2 23H30M10 2V30" stroke="#5560a8" stroke-width="2"/></symbol>
<symbol id="t14" viewBox="0 0 32 32"><path d="M5 7H27M5 24H27M10 10 22 21M22 10 10 21" stroke="#444" stroke-width="2"/><circle cx="6" cy="7" r="5" fill="#3f8ee0"/><circle cx="16" cy="7" r="5" fill="#3f8ee0"/><circle cx="26" cy="7" r="5" fill="#3f8ee0"/><circle cx="6" cy="24" r="5" fill="#3f8ee0"/><circle cx="16" cy="24" r="5" fill="#3f8ee0"/><circle cx="26" cy="24" r="5" fill="#3f8ee0"/><circle cx="11" cy="15" r="3.500" fill="#e5502a"/><circle cx="22" cy="15" r="3.500" fill="#e5502a"/></symbol>
<symbol id="t15" viewBox="0 0 32 32"><path d="M0 3Q16 4 16 16T0 29Z" fill="#f2c40c" stroke="#7a6205"/><path d="M16 14 30 2V28L26 30 16 20Z" fill="#ffb3c8" stroke="#c88"/><path d="M16 14 26 17V30M26 17 31 13" fill="none" stroke="#d9953a" stroke-width="2"/></symbol>
<symbol id="t16" viewBox="0 0 32 32"><path d="M0 0H31V31H0Z" fill="#fff"/><path d="M5 2H11V30H5Z" fill="#f06a10"/><path d="M11 22H31" stroke="#f06a10" stroke-width="4"/><path d="M19 5V14M14 13H24L19 19Z" stroke="#1a1af0" stroke-width="2.500" fill="#1a1af0"/><path d="M1 6H5M1 12H5M1 18H5M1 24H5" stroke="#555" stroke-width="1.500"/></symbol>
<symbol id="m1" viewBox="0 0 32 32"><path d="M2 2H30V30H2Z" fill="#94cf72"/><path d="M11 2V30M21 2V30M2 11H30M2 21H30" stroke="#7fb9a0"/><path d="M2 2H30V30H2Z" fill="none" stroke="#8a8fd8" stroke-width="2" stroke-dasharray="3 6.300"/></symbol>
<symbol id="m2" viewBox="0 0 32 32"><path d="M3 3H29V16H3Z" fill="#94cf72"/><path d="M3 16H29V29H3Z" fill="#f3f0c0"/><path d="M11 9 15 14 23 2" fill="none" stroke="#444" stroke-width="2"/><path d="M3 3H29V29H3Z" fill="none" stroke="#8a8fd8" stroke-width="2" stroke-dasharray="3 5.600"/></symbol>
<symbol id="m3" viewBox="0 0 32 32"><path d="M3 3H29V16H3Z" fill="#f3f0c0"/><path d="M3 16H29V29H3Z" fill="#94cf72"/><path d="M11 9 15 14 23 2" fill="none" stroke="#444" stroke-width="2"/><path d="M3 3H29V29H3Z" fill="none" stroke="#8a8fd8" stroke-width="2" stroke-dasharray="3 5.600"/></symbol>
<symbol id="m4" viewBox="0 0 32 32"><path d="M3 3H29V16H3Z" fill="#94cf72"/><path d="M3 16H29V29H3Z" fill="#f3f0c0"/><ellipse cx="16" cy="8" rx="5" ry="4" fill="#ddd" stroke="#666" stroke-width="1.500"/><circle cx="16" cy="8" r="2" fill="#444"/><path d="M3 3H29V29H3Z" fill="none" stroke="#8a8fd8" stroke-width="2" stroke-dasharray="3 5.600"/></symbol>
<symbol id="m5" viewBox="0 0 32 32"><path d="M3 3H29V16H3Z" fill="#f3f0c0"/><path d="M3 16H29V29H3Z" fill="#94cf72"/><ellipse cx="16" cy="8" rx="5" ry="4" fill="#ddd" stroke="#666" stroke-width="1.500"/><circle cx="16" cy="8" r="2" fill="#444"/><path d="M3 3H29V29H3Z" fill="none" stroke="#8a8fd8" stroke-width="2" stroke-dasharray="3 5.600"/></symbol>
<symbol id="m6" viewBox="0 0 32 32"><path d="M3 3H29V29H3Z" fill="#f3f0c0" stroke="#8a8fd8" stroke-width="3" stroke-dasharray="3 5.600"/><path d="M12 3V29M21 3V29" stroke="#ddd9a0"/></symbol>
<symbol id="m7" viewBox="0 0 32 32"><path d="M4 6 12 2 28 6V26L16 31 6 25Z" fill="#94cf72" stroke="#7f9fb0"/><path d="M5 6 16 4 20 20 10 23Z" fill="#f3f0c0"/></symbol>
<symbol id="m8" viewBox="0 0 32 32"><path d="M10 7H29L20 20H1Z" fill="#94cf72"/><path d="M1 20H20L18 25H0Z" fill="#f3f0c0"/></symbol>
<symbol id="m9" viewBox="0 0 32 32"><path d="M10 7H29L20 20H1Z" fill="#f3f0c0"/><path d="M1 20H20L18 25H0Z" fill="#94cf72"/><path d="M20 20 29 12V16L18 25Z" fill="#94cf72"/></symbol>
<symbol id="m10" viewBox="0 0 32 32"><path d="M2 2H20V19H2Z" fill="#8f95e0"/><path d="M14 12 30 23 24 24 28 32 23 32 20 25 17 28Z" fill="#5358c0"/></symbol>
<symbol id="m11" viewBox="0 0 32 32"><path d="M18 2 16 18M26 2 24 18M13 7H30M12 13H29" stroke="#4f55c8" stroke-width="2.500"/><path d="M2 27H28M7 23 2 27 7 31" stroke="#4f55c8" stroke-width="2.500" fill="none"/></symbol>
</svg>

<main class="page">
  <section class="win win-c" id="winC"></section>
  <p class="caption-fig cap-c mb-0">(<b>c</b>)</p>
  <section class="win win-d" id="winD"></section>
  <p class="caption-fig mb-0">(<b>d</b>)</p>
</main>

<template id="ribC">
  <div class="grp" style="width:1010px">
    <div class="rgrid">
      <span>New (Structural)<i class="caret"></i></span><span></span><span>New (General)<i class="caret"></i></span><span class="d-flex justify-content-between align-items-center pe-3">Tools<i class="caret"></i></span><span>Properties</span>
      <span></span><span></span><span>Show Menu</span><span class="d-flex align-items-center gap-2"><input type="checkbox" class="tick" id="ident"><label for="ident">Identify</label></span><span></span>
      <span></span><span>New (State Variable)<i class="caret"></i></span><span>Edit</span><span>Plot Settings<i class="caret"></i></span>
    </div>
    <div class="grp-foot">Boundary Conditions</div>
  </div>
</template>
<template id="ribD">
  <div class="d-flex gap-3">
    <div class="grp" style="width:285px">
      <div class="rgrid"><span class="d-flex justify-content-between align-items-center" style="width:140px">New<i class="caret"></i></span><span style="margin-left:-73px">Properties</span><span></span><span></span><span></span><span>Show Menu</span><span></span><span></span><span></span><span></span><span>Edit</span></div>
      <div class="grp-foot">Jobs</div>
    </div>
    <div class="grp px-2" style="height:40px;width:193px">Element Types</div>
    <div class="grp px-2" style="height:40px;width:180px">User Domains</div>
  </div>
</template>

<template id="dlgC">
  <form class="dlg dlg-bc" id="bc">
    <div class="dlg-title d-flex align-items-center gap-2"><svg class="logo"><use href="#logo"/></svg><span>Boundary Condition Properties</span><svg class="ms-auto" width="26" height="28" viewBox="0 0 26 28"><path d="M3 3 23 25M23 3 3 25" stroke="#222" stroke-width="2"/></svg></div>
    <div class="frow"><label class="w-152" for="bcname">Name</label><input class="fld fst-normal" id="bcname" value="apply1"></div>
    <div class="frow"><label class="w-152" for="bctype">Type</label><input class="fld" id="bctype" value="fixed_displacement" readonly></div>
    <fieldset class="props"><legend>Properties</legend>
      <div class="stack g4" style="width:674px;padding-left:11px">
        <div class="top-al"><label class="w-247" for="q1">Degrees Of Freedom</label><span class="combo"><select id="q1"><option>Standard</option></select></span></div>
        <div class="top-al"><label class="w-184" for="q2">Method</label><span class="combo"><select id="q2"><option>Entered Values</option></select></span></div>
        <div class="top-al"><label class="w-251" for="q3">Reference Position</label><span class="combo"><select id="q3"><option>Position At Activation Of BC</option></select></span></div>
        <div class="top-al"><label class="w-221" for="q4">Time Dependence</label><span class="combo"><select id="q4"><option>Tables</option></select></span></div>
      </div>
      <fieldset class="props-in stack g4">
        <div class="d-flex align-items-center">
          <input type="checkbox" class="tick" id="dx" checked><label for="dx" class="ms-2 ps-1" style="width:173px">Displacement X</label>
          <span class="d-flex" style="width:256px"><input class="fld fst-normal" aria-label="Displacement X value" value="0"><span class="fld fst-normal border-start-0" style="width:48px">[L]</span></span>
          <button type="button" class="ubtn ms-1" style="width:109px;height:34px">Table</button><input class="fld flex-grow-1" style="width:0" aria-label="Table name">
        </div>
        <div class="d-flex align-items-center" style="height:34px"><input type="checkbox" class="tick" id="dy"><label for="dy" class="ms-2 ps-1">Displacement Y</label></div>
        <div class="d-flex align-items-center" style="height:34px"><input type="checkbox" class="tick" id="rz"><label for="rz" class="ms-2 ps-1">Rotation Z</label></div>
      </fieldset>
    </fieldset>
    <fieldset class="ent"><legend>Entities</legend>
      <div class="stack g4" id="entRows"></div>
      <div class="d-flex g5 mini-bar" id="miniBar"></div>
    </fieldset>
    <div class="d-flex justify-content-between" style="margin-top:27px;padding-left:3px"><button type="button" class="ubtn" style="width:161px">Clear</button><button type="button" class="ubtn" style="width:161px">OK</button></div>
  </form>
  <svg class="annot"><rect x="52" y="329" width="893" height="1084" fill="none" stroke="#f00" stroke-width="9" stroke-dasharray="28 9"/><path d="M945 468 1719 192" stroke="#f00" stroke-width="7" stroke-dasharray="31 18"/></svg>
</template>

<template id="dlgD">
  <form class="dlg dlg-job">
    <div class="dlg-title d-flex align-items-center gap-2" style="color:#999"><svg class="logo"><use href="#logo"/></svg><span>Job Properties</span><svg class="ms-auto" width="26" height="28" viewBox="0 0 26 28"><path d="M3 3 23 25M23 3 3 25" stroke="#999" stroke-width="2"/></svg></div>
    <div class="frow pt-1"><label class="w-170" for="jn">Name</label><input class="fld" id="jn"></div>
    <div class="frow pt-1"><label class="w-170" for="jt">Type</label><input class="fld" id="jt"></div>
    <div class="d-flex align-items-center" style="height:34px;margin:18px 0 8px 6px"><input type="checkbox" class="tick" id="lin"><label class="ms-2 ps-1" for="lin">Linear Elastic</label></div>
    <div class="d-flex align-items-center" style="height:34px;margin-left:6px"><input type="radio" class="tick tick-round rounded-circle" id="lar"><label class="ms-2 ps-1" for="lar">Large Strain</label></div>
    <fieldset style="margin:31px 5px 0;padding:20px 10px 10px 11px">
      <div class="ps-2">Selected</div>
      <div class="lbox d-flex justify-content-between align-items-start" style="margin-top:16px;padding:12px 8px 0 10px"><button type="button" class="ubtn" style="height:32px;width:300px"></button><button type="button" class="ubtn" disabled style="height:32px;width:80px;line-height:24px">Down</button></div>
      <div class="ps-2" style="margin:8px 0 7px">Available</div>
      <div class="lbox"></div>
    </fieldset>
    <div class="job3" style="margin-top:20px;padding-left:1px">
      <button type="button" class="ubtn ubtn-l"><i class="led led-y"></i>Initial Loads</button><button type="button" class="ubtn"></button><button type="button" class="ubtn">Analysis Options</button>
      <button type="button" class="ubtn ubtn-l"><i class="led"></i>Inertia Relief</button><button type="button" class="ubtn"></button><button type="button" class="ubtn"></button>
      <button type="button" class="ubtn">Contact Control</button><button type="button" class="ubtn"></button><button type="button" class="ubtn">Job Parameters</button>
      <button type="button" class="ubtn" disabled>Mesh Adaptivity</button><button type="button" class="ubtn"></button><span></span>
      <button type="button" class="ubtn"></button><button type="button" class="ubtn"></button><button type="button" class="ubtn">Solution Variable</button>
      <button type="button" class="ubtn ubtn-l" disabled><i class="led"></i>Crack Initiators</button><button type="button" class="ubtn ubtn-l"><i class="led"></i>Model Sections</button>
    </div>
    <div class="d-flex justify-content-between" style="margin-top:22px">
      <div class="stack g4" style="width:482px;padding-left:1px">
        <div class="d-flex g5"><button type="button" class="ubtn ubtn-l" style="width:236px"><i class="led"></i>Deactivation</button><button type="button" class="ubtn ubtn-l flex-grow-1"><i class="led"></i>DMIG Out</button></div>
        <div class="d-flex g5"><button type="button" class="ubtn ubtn-l" style="width:266px"><i class="led"></i>Input File Text</button><button type="button" class="ubtn ubtn-l flex-grow-1"><i class="led"></i>Include File</button></div>
        <button type="button" class="ubtn" style="width:109px">Title</button>
      </div>
      <div class="stack pt-2" style="width:324px;gap:27px"><button type="button" class="ubtn">Check</button><button type="button" class="ubtn">Run</button></div>
    </div>
    <div class="d-flex justify-content-between" style="margin-top:20px;padding-left:1px"><button type="button" class="ubtn" style="width:163px">Reset</button><button type="button" class="ubtn" style="width:163px">OK</button></div>
  </form>
  <form class="dlg dlg-run">
    <div class="dlg-title d-flex align-items-center gap-2"><svg class="logo"><use href="#logo"/></svg><span>Run Job</span><svg class="ms-auto" width="26" height="28" viewBox="0 0 26 28"><path d="M3 3 23 25M23 3 3 25" stroke="#222" stroke-width="2"/></svg></div>
    <div class="frow"><label class="w-173" for="rn">Name</label><input class="fld" id="rn" value="job1" readonly></div>
    <div class="frow"><label class="w-173" for="rt">Type</label><input class="fld" id="rt" value="Structural" readonly></div>
    <fieldset class="run-fs run-fs-first"><legend>User Subroutines</legend>
      <div class="two"><button type="button" class="ubtn">Fortran Source File</button><button type="button" class="ubtn ubtn-l ps-2" disabled><i class="led ms-1"></i>Selected User Subs</button></div>
    </fieldset>
    <fieldset class="run-fs"><legend>Solver/Parallelization</legend>
      <div class="two"><button type="button" class="ubtn" style="height:34px;line-height:26px">Settings</button><span></span>
      <input class="fld" aria-label="Solution" value="Symmetric Solution" readonly><input class="fld" aria-label="Decomposition" value="No DDM" readonly>
      <input class="fld" aria-label="Solver" value="Multifrontal Sparse Solver" readonly><input class="fld" aria-label="Assembly" value="1 Assembly/Recovery Thread" readonly>
      <span></span><span class="d-flex g4"><input class="fld" style="width:248px" aria-label="Solver thread" value="1 Solver Thread" readonly><input class="fld flex-grow-1" style="width:0" aria-label="GPU" value="No GPU(s)" readonly></span></div>
    </fieldset>
    <fieldset class="run-fs"><legend>Input Style And Job Title</legend>
      <div class="two"><div class="top-al"><label for="sty" style="width:111px;padding-left:10px">Style</label><span class="combo"><select id="sty"><option>Table-Driven</option></select></span></div><div class="two"><button type="button" class="ubtn">Title</button><button type="button" class="ubtn">Save Model</button></div></div>
    </fieldset>
    <fieldset class="run-fs" style="padding-bottom:16px"><legend>Job Submission And Control</legend>
      <div class="two" style="gap:5px"><button type="button" class="ubtn">Submit (1)</button><button type="button" class="ubtn">Advanced Job Submission</button>
      <div class="two"><button type="button" class="ubtn">Update</button><button type="button" class="ubtn">Monitor</button></div><div class="two"><button type="button" class="ubtn">Reset</button><button type="button" class="ubtn" disabled>Kill</button></div></div>
      <div id="runRows" class="mt-1"></div>
      <fieldset style="padding:7px 13px 12px 22px"><legend>Accumulated Analysis Statistics</legend><div class="stat" id="statRows"></div></fieldset>
      <fieldset style="margin-top:5px;padding:8px 13px 12px 22px"><legend>Job Completion</legend>
        <div class="d-flex" style="gap:6px"><label for="ex" style="width:174px">Exit Number</label><input class="fld" id="ex" style="width:205px" value="3004" readonly><button type="button" class="ubtn flex-grow-1">Exit Message</button></div></fieldset>
    </fieldset>
    <fieldset class="run-fs"><legend>Edit Files</legend>
      <div class="two"><div class="two"><button type="button" class="ubtn">Output File</button><button type="button" class="ubtn">Log File</button></div><div class="two"><button type="button" class="ubtn">Status File</button><button type="button" class="ubtn">Any File</button></div></div>
    </fieldset>
    <div class="stack g5 align-items-center" style="margin-top:11px"><button type="button" class="ubtn" style="width:808px">Open Post File</button><button type="button" class="ubtn" style="width:163px">OK</button></div>
  </form>
  <svg class="annot"><rect x="207" y="230" width="882" height="1306" fill="none" stroke="#f00" stroke-width="9" stroke-dasharray="28 9"/></svg>
</template>

<script>
const $ = id => document.getElementById(id);
const ic = n => `<svg><use href="#${n}"/></svg>`;
const tb = n => `<button type="button" class="tb" aria-label="${n}">${ic(n)}</button>`;
const row = s => s.split(' ').map(n => n === '|' ? '<span class="vsep"></span>' : n === '#' ? '<span class="grip"></span>' : n[0] === '+' ? `<button type="button" class="tb tb-wide" aria-label="${n.slice(1)}">${ic(n.slice(1))}<i class="caret"></i></button>` : tb(n)).join('');
const sideBtns = `<button type="button" class="sbtn" aria-label="close"><svg width="18" height="20" viewBox="0 0 18 20"><path d="M3 3 15 17M15 3 3 17" stroke="#111" stroke-width="4"/></svg></button><button type="button" class="sbtn" aria-label="float"><svg width="22" height="24" style="color:#111"><use href="#restore"/></svg></button>`;
const tabs = ['Geometry & Mesh','Tables & Coord, Syst,','Geometric Properties','Material Properties','Contact','Toolbox','Links','Initial Conditions','Boundary Conditions','Mesh Adaptivity','Loadcases','Jobs','Results'];
const bar = s => s.split(' ').map(n => n === '|' ? '<div class="hsep"></div>' : n === '#' ? '<div class="hgrip"></div>' : n === '##' ? '<div class="hgrip hgrip-mid"></div>' : `<button type="button" class="sb ${n[0] === '*' ? 'hot' : ''}" aria-label="${n}">${ic(n.replace('*',''))}</button>`).join('');

function build(o) {
  return `
  <header class="titlebar d-flex align-items-center gap-2"><svg class="logo"><use href="#logo"/></svg><span>Marc Mentat 2020 Feature Pack 1 (64bit): h:₩cae₩2021₩072_fe₩1₩1.39_epdm_kimm_uni_yeoh.mud: 1.39_epdm_kimm_uni_yeoh.mud - [${o.view} (View 1)]</span>
    <div class="ms-auto d-flex"><button type="button" class="wctl" aria-label="Minimize"><svg width="20" height="24"><path d="M0 12H20" stroke="#aaa" stroke-width="2"/></svg></button><button type="button" class="wctl" aria-label="Maximize"><svg width="20" height="22"><path d="M1 2H19V20H1Z" fill="none" stroke="#aaa" stroke-width="2"/></svg></button><button type="button" class="wctl" aria-label="Close"><svg width="20" height="22"><path d="M1 1 19 21M19 1 1 21" stroke="#aaa" stroke-width="2"/></svg></button></div></header>
  <nav class="menubar d-flex align-items-center"><svg width="30" height="32" style="margin-right:14px"><use href="#doc"/></svg>${['File','Select','View','Tools','Mode','Window','Help'].map(t => `<a href="#">${t}</a>`).join('')}
    <div class="ms-auto d-flex"><span class="mdi"><svg width="14" height="20"><path d="M1 17H13" stroke="#5b6a80" stroke-width="4"/></svg></span><span class="mdi"><svg width="22" height="24" style="color:#5b6a80"><use href="#restore"/></svg></span><span class="mdi"><svg width="16" height="18"><path d="M2 2 14 16M14 2 2 16" stroke="#5b6a80" stroke-width="4"/></svg></span></div></nav>
  <div class="toolbar d-flex"><span class="grip grip-first"></span>${row('new open save | updb updb | undo redo | pencil # dots | dim ang | +sel +plane | grad poly | cam cam2 # nodes calc cursor pal # w1 w2 w3 w4 #')}
    <div class="d-flex align-items-center gap-1 ps-2"><span class="me-1 pb-1">Analysis</span><button type="button" class="tb h-100 border-end-0" aria-label="Planar">${ic('pln')}</button><i class="caret mt-2 me-2"></i><b class="pb-1">Structural</b><i class="caret ms-2 mt-3"></i></div></div>
  <div class="d-flex"><aside class="side">${sideBtns}<span class="vtext overflow-hidden mt-1" style="height:100px">Main Menu</span></aside>
    <div class="flex-grow-1"><div class="tabs d-flex">${tabs.map(t => `<a href="#" class="${t === o.tab ? 'on' : ''}">${t.replace('&','&amp;')}</a>`).join('')}</div><div class="ribbon">${$(o.rib).innerHTML}</div></div></div>
  <div class="split"></div>
  <div class="d-flex">
    <div class="nav-col d-flex flex-column"><div class="d-flex flex-grow-1"><aside class="side">${sideBtns}<span class="vtext mt-auto" style="padding-top:12px">Model Navigator</span></aside><div class="flex-grow-1 d-flex flex-column">${o.nav}</div></div>
      <div class="bot-tabs d-flex"><a href="#">Dynamic Menu</a><a href="#" class="on">Model Navigator</a></div></div>
    <div class="nav-gap"></div>
    <div class="flex-grow-1 d-flex flex-column" style="min-width:0">
      <div class="toolbar viewbar d-flex">${row('target target mag | al ar ad au aq az | rh rh rv rv rd rd #')}<span class="d-flex ${o.faded}">${row('c1 c2 c3 c4 c5 c6 iso iso iso iso')}</span></div>
      <div class="d-flex flex-grow-1"><div class="flex-grow-1" style="min-width:0">
        <div class="viewport">${o.svg}</div>
        <div class="d-flex" style="border-top:4px solid #a9c5ec;padding-top:6px"><aside class="side" style="width:36px;height:146px">${sideBtns}<span class="vtext" style="height:70px">Dialog</span></aside>
          <div class="flex-grow-1 ps-3 d-flex flex-column gap-1"><div class="log d-flex"><div class="log-in flex-grow-1">${o.log}</div><div class="scroll"><svg width="20" height="26"><path d="M3 18 10 9 17 18" fill="none" stroke="#444" stroke-width="3"/></svg><span class="thumb"></span><svg width="20" height="26"><path d="M3 9 10 18 17 9" fill="none" stroke="#444" stroke-width="3"/></svg></div></div>
            <div class="d-flex"><label for="cmd${o.k}" style="width:186px;padding-left:14px;line-height:34px">Command &gt;</label><input class="cmd flex-grow-1" id="cmd${o.k}"></div></div></div>
      </div>
      <div class="rbar">${bar('# s1 | *s2 *s3 *s4 s5 s6 s7 | *s8 s9 *s10 | s11 *s12 ## s13 s14 s15 s16 s17 s18 s19 s20 s21 | s22 s23')}</div>
      <div class="rbar">${bar('# t1 | t2 t3 t4 t5 | t6 t7 t8 | t9 ## t10 | t11 t12 | t13 t14 t15 t16 | pal2')}</div></div>
    </div>
  </div>
  <footer class="status d-flex"><span>Ready</span><span class="status-box"></span></footer>
  ${$(o.dlg).innerHTML}`;
}

/* model view: plates and rubber rings with load arrows */
function model() {
  const R = (x, y, w, h, f = 'url(#mesh)') => `<rect x="${x}" y="${y}" width="${w}" height="${h}" fill="${f}" stroke="#333" stroke-width="1"/>`;
  let s = '<path d="M0 58H2460" stroke="#ffaaa5" stroke-width="4"/><path d="M0 1196H2460" stroke="#ff8f8a" stroke-width="3"/>';
  s += R(808,57,689,95) + R(808,425,689,111) + R(808,809,689,111);
  for (const [y0, y1, b0, b1] of [[152,425,235,341],[536,809,619,726],[920,1196,1006,1111]]) {
    s += R(860, b0, 585, b1 - b0);
    for (const x of [920, 1212]) s += `<rect x="${x}" y="${y0}" width="173" height="${y1-y0}" rx="86" fill="url(#mesh2)" stroke="#222" stroke-width="2"/><rect x="${x+24}" y="${y0+24}" width="125" height="${y1-y0-48}" rx="62" fill="url(#mesh)"/><rect x="${x}" y="${b0+8}" width="173" height="${b1-b0-16}" fill="url(#mesh)"/>`;
  }
  for (const [a, b] of [[133,152],[276,298],[425,446],[518,536],[662,686],[809,829],[902,920],[1046,1069]]) {
    s += R(651, a, a === 276 || a === 662 || a === 1046 ? 209 : 157, b - a) + R(1445, a, 209, b - a) + R(1340, a, 157, b - a, 'url(#pinkv)');
    let p = '';
    for (let i = 0; i < 5; i++) { const y = Math.round(a + (b - a) * i / 4);
      p += `M338 ${y}H651M1340 ${a + (i > 2 ? b - a : 0)}H1654`;
      for (const e of [651, 1654]) p += `M${e-77} ${y-20}L${e} ${y}L${e-77} ${y+20}`; }
    s += `<path d="${p}" fill="none" stroke="#df66f7" stroke-width="1.500"/>`;
  }
  s += '<path d="M1761 1172V1072M1755 1084 1761 1070 1767 1084M1761 1172H1866M1852 1166 1866 1172 1852 1178" fill="none" stroke="#222" stroke-width="2"/><text class="tx" x="1760" y="1066">Y</text><text class="tx" x="1864" y="1168">X</text><text class="tx" x="1759" y="1172">Z</text><text x="2412" y="1268" font-size="22" fill="#a9b0e0">1</text>';
  return `<svg viewBox="0 0 2460 1285">${s}</svg>`;
}
/* data fit plot: stress against strain */
function plot() {
  const x0 = 697, x1 = 1853, y0 = 135, y1 = 1177; let g = '';
  for (let i = 1; i < 10; i++) { g += `M${x0 + (x1-x0)*i/10} ${y0}V${y1}M${x0} ${y0 + (y1-y0)*i/10}H${x1}`; }
  const pts = [[0,0],[.05,.083],[.1,.158],[.15,.225],[.2,.287],[.25,.343],[.3,.397],[.4,.497],[.5,.592],[.6,.68],[.7,.765],[.8,.845],[.9,.925],[1,1]];
  const line = (k) => pts.map(([a,b], i) => (i ? 'L' : 'M') + Math.round(x0+a*(x1-x0)) + ' ' + Math.round(y1-b*(y1-y0) + (i < 13 ? k * Math.sin(i * 2) : 0))).join('');
  const d = line(0);
  return `<svg viewBox="0 0 2452 1281"><path d="${g}" stroke="#777" stroke-width="2"/><rect x="${x0}" y="${y0}" width="${x1-x0}" height="${y1-y0}" fill="none" stroke="#222" stroke-width="3"/>
  <path d="${line(5)}" fill="none" stroke="#2020f0" stroke-width="5" stroke-linejoin="round"/><path d="${d}" fill="none" stroke="#f01828" stroke-width="5"/><path d="${d}" fill="none" stroke="#f01828" stroke-width="10" stroke-dasharray="2 12"/>
  <g class="tx"><text x="586" y="68">stress</text><text x="595" y="133">1</text><text x="595" y="1176">0</text><text x="696" y="1209">0</text><text x="1854" y="1209">3,5</text><text x="1123" y="1240">strain (x,1)</text><text x="676" y="1273">1(Input)</text><text x="1319" y="1273">1(Output)</text></g>
  <path d="M585 1269H666M588 1269v7M626 1269v7M662 1269v7" stroke="#2020f0" stroke-width="4"/><path d="M1222 1269H1308M1232 1262v14M1264 1262v14M1298 1262v14" stroke="#f01828" stroke-width="3"/><text x="2400" y="1264" font-size="22" fill="#a9b0e0">1</text></svg>`;
}
$('winC').innerHTML = build({k:'c', view:'Model', tab:'Boundary Conditions', rib:'ribC', dlg:'dlgC', svg:model(), faded:'',
  nav:'<div class="nav-pane flex-grow-1 d-flex"><div class="nav-list flex-grow-1"></div></div>',
  log:'Enter apply name :<br>Command &gt; *dynamic_model_on<br>Command &gt; *dynamic_model_off'});
$('winD').innerHTML = build({k:'d', view:'Data Fit', tab:'Jobs', rib:'ribD', dlg:'dlgD', svg:plot(), faded:'faded',
  nav:'<div class="tabs d-flex"><a href="#" class="on">Model</a><a href="#">List</a></div><div class="nav-pane flex-grow-1 d-flex"><div class="nav-list nav-rows flex-grow-1"><div class="d-flex align-items-center gap-2 ps-2" style="color:#222"><svg width="22" height="22"><path d="M2 2H20V20H2ZM6 11H16" fill="#fff" stroke="#888" stroke-width="2"/></svg><svg width="32" height="28" class="ms-2"><use href="#pln"/></svg>1.39_epdm</div></div></div>',
  log:'Command &gt; *submit_job *monitor_jobs *edit_job job1'});
$('entRows').innerHTML = ['Model Section Vertices','Nodes','Points','Curves','Surfaces','Solid Vertices','Solid Edges','Solid Faces','Solids'].map((t,i) => `<div class="top-al"><label class="flex-grow-1" for="e${i}">${t}</label><button type="button" class="ubtn" style="width:69px;height:35px">Add</button><button type="button" class="ubtn" style="width:69px;height:35px;margin:0 2px">Rem</button><input class="fld" style="width:108px;height:35px" id="e${i}" value="${t === 'Nodes' ? 64 : 0}" readonly></div>`).join('');
$('miniBar').innerHTML = [1,2,3,4,5,6,7,8,9,10,11].map(i => `<button type="button" class="mini ${i > 9 ? 'ms-2' : ''}" aria-label="m${i}">${ic('m'+i)}</button>`).join('');
$('runRows').innerHTML = [['Status','Complete'],['Current Increment (Cycle)','50 (2)'],['Singularity Ratio','0.0003763'],['Convergence Ratio','0.0005356'],['Fraction Of Increment (Contact)','1'],['Analysis Time','1']].map(([a,b],i) => `<div class="d-flex" style="height:36px"><label for="r${i}" style="flex:1;padding-left:10px">${a}</label><input class="fld" style="flex:1" id="r${i}" value="${b}" readonly></div>`).join('');
$('statRows').innerHTML = [['Cycles','144','Cut Backs','0'],['Separations','6','Remeshes','0'],['Warning Messages','7','Wall Time','197']].map(([a,b,c,d],i) => `<label for="a${i}">${a}</label><input class="fld" id="a${i}" value="${b}" readonly><span></span><label for="b${i}">${c}</label><input class="fld" id="b${i}" value="${d}" readonly>`).join('');
</script>
</body>
</html>
